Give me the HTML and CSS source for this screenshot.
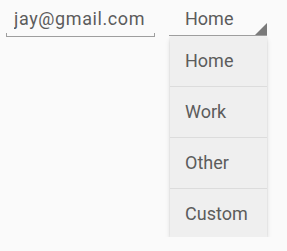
FILE: index.html
```html
<!DOCTYPE html>
<html lang="en">
<head>
    <meta charset="UTF-8">
    <meta name="viewport" content="width=device-width, initial-scale=1.0">
    <title>Contact</title>
    <link rel="stylesheet" href="styles.css">
</head>
<body>
    <div class="row">
        <div class="email">
            <input type="text" id="email" value="jay@gmail.com">
        </div>

        <div class="spinner">
            <div class="selected">Home</div>
            <div class="menu">
                <div class="item">Home</div>
                <div class="item">Work</div>
                <div class="item">Other</div>
                <div class="item">Custom</div>
            </div>
        </div>
    </div>
</body>
</html>
```

FILE: styles.css
```css
body {
    font-family: Roboto, "Liberation Sans", sans-serif;
    margin: 0;
    padding: 0;
    background-color: #fafafa;
    color: #5c5c5c;
}

.row {
    display: flex;
    align-items: flex-start;
    padding: 0 0 0 6px;
}

.email {
    width: 149px;
    height: 37px;
    position: relative;
    border-bottom: 1px solid #9e9e9e;
    box-sizing: border-box;
}

.email::before,
.email::after {
    content: "";
    position: absolute;
    bottom: 0;
    width: 1px;
    height: 3px;
    background: #9e9e9e;
}

.email::before {
    left: 0;
}

.email::after {
    right: 0;
}

.email input {
    width: 100%;
    box-sizing: border-box;
    border: none;
    background: none;
    outline: none;
    font-family: inherit;
    font-size: 18px;
    letter-spacing: 0.6px;
    color: #5c5c5c;
    padding: 8px 0 0 8px;
}

.spinner {
    margin-left: 14px;
    width: 98px;
    display: flex;
    flex-direction: column;
}

.selected {
    height: 36px;
    box-sizing: border-box;
    padding: 8px 0 0 16px;
    font-size: 18px;
    border-bottom: 1px solid #9e9e9e;
    position: relative;
}

.selected::after {
    content: "";
    position: absolute;
    right: 0;
    bottom: 0;
    width: 0;
    height: 0;
    border-left: 12px solid transparent;
    border-bottom: 12px solid #7a7a7a;
}

.menu {
    margin: 1px 0 0 1px;
    background: #efefef;
    box-shadow: 0 3px 5px rgba(0, 0, 0, 0.12), 0 0 2px rgba(0, 0, 0, 0.1);
}

.item {
    height: 51px;
    box-sizing: border-box;
    padding: 14px 0 0 15px;
    font-size: 18px;
    border-top: 1px solid #dcdcdc;
}

.item:first-child {
    border-top: none;
    height: 49px;
    padding-top: 13px;
}

.item:last-child {
    height: 49px;
}
```
